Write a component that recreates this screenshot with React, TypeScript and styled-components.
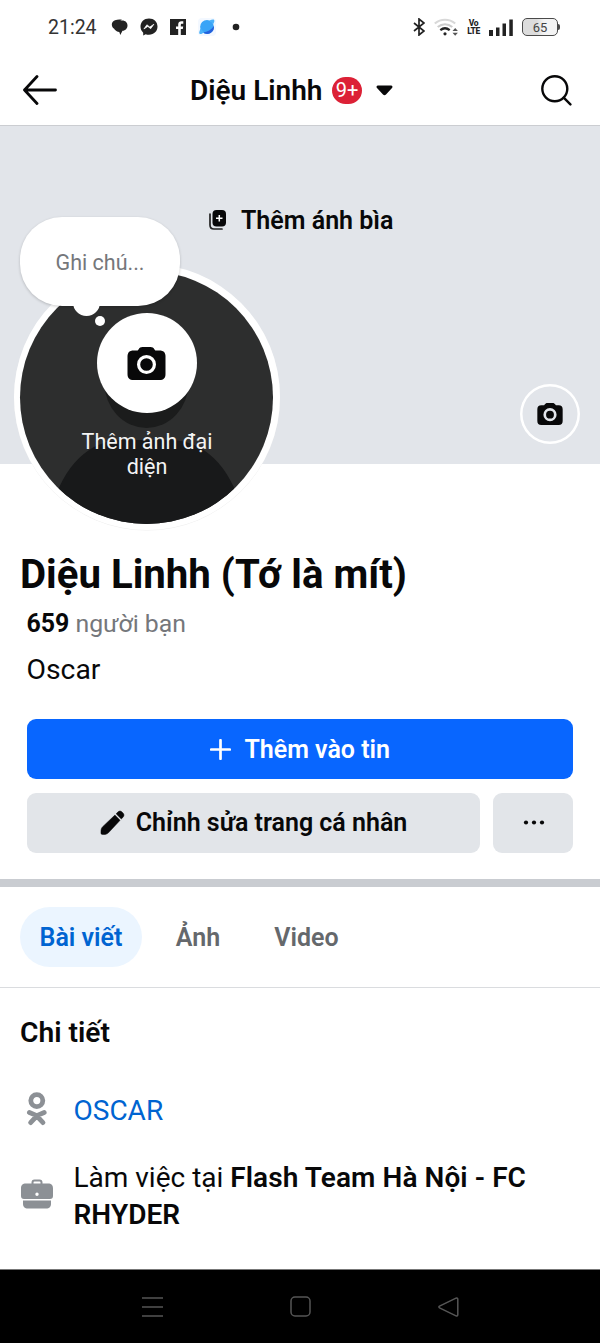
import React from "react";
import styled, { createGlobalStyle } from "styled-components";

const GlobalStyle = createGlobalStyle`
  * { box-sizing: border-box; }
  body { margin: 0; background: #fff; }
  button { font: inherit; color: inherit; border: 0; padding: 0; background: none; }
  svg { display: block; flex: none; }
`;

const Screen = styled.div`
  width: 600px;
  height: 1343px;
  display: flex;
  flex-direction: column;
  overflow: hidden;
  background: #fff;
  color: #080809;
  font-family: Roboto, "Liberation Sans", sans-serif;
`;

const Label = styled.span<{ $size: number; $weight?: number; $spacing?: number; $color?: string }>`
  font-size: ${(p) => p.$size}px;
  font-weight: ${(p) => p.$weight ?? 400};
  letter-spacing: ${(p) => p.$spacing ?? 0}px;
  color: ${(p) => p.$color ?? "inherit"};
  white-space: nowrap;
`;

const StatusBar = styled.div`
  height: 54px;
  display: flex;
  align-items: center;
  justify-content: space-between;
  padding: 0 42px 0 48px;
`;

const StatusGroup = styled.div<{ $gap: number }>`
  display: flex;
  align-items: center;
  gap: ${(p) => p.$gap}px;
`;

const Clock = styled(Label)`
  width: 49px;
  margin-right: 2px;
`;

const VoLte = styled.span`
  display: flex;
  flex-direction: column;
  align-items: center;
  width: 13px;
  font-size: 8.5px;
  line-height: 8px;
  font-weight: 800;
  letter-spacing: -0.4px;
  color: #222;
`;

const Battery = styled.span`
  position: relative;
  width: 36px;
  height: 18px;
  border: 1.5px solid #4a4a4a;
  border-radius: 5px;
  background: linear-gradient(90deg, #dcdcdc 0 40%, #f4f4f4 62%);
  display: flex;
  align-items: center;
  justify-content: center;
  font-size: 13px;
  line-height: 15px;
  color: #444;
  &::after {
    content: "";
    position: absolute;
    right: -3px;
    top: 5px;
    width: 2px;
    height: 6px;
    border-radius: 0 2px 2px 0;
    background: #4a4a4a;
  }
`;

const Header = styled.header`
  height: 72px;
  display: grid;
  grid-template-columns: 60px 1fr 60px;
  align-items: center;
  border-bottom: 1px solid #cbcdd1;
`;

const HeaderTitle = styled.div`
  display: flex;
  align-items: center;
  padding: 2px 0 0 130px;
`;

const CountBadge = styled.span`
  width: 30px;
  height: 27px;
  margin: -1px 14px 0 9.5px;
  border-radius: 14px;
  background: #dc2136;
  display: flex;
  align-items: center;
  justify-content: center;
`;

const IconSlot = styled.button<{ $left: number; $top?: number }>`
  padding: ${(p) => p.$top ?? 0}px 0 0 ${(p) => p.$left}px;
`;

const Cover = styled.section`
  position: relative;
  height: 338px;
  background: #e2e5ea;
`;

const AddCover = styled.button`
  display: flex;
  align-items: center;
  gap: 15px;
  height: 188px;
  padding-left: 209px;
`;

const CoverCamera = styled.button`
  position: absolute;
  right: 20px;
  bottom: 20px;
  width: 60px;
  height: 60px;
  border-radius: 50%;
  box-shadow: inset 0 0 0 2.5px #fff;
  display: flex;
  align-items: center;
  justify-content: center;
`;

const Avatar = styled.div`
  position: absolute;
  left: 13.5px;
  top: 138px;
  width: 266px;
  height: 266px;
  padding: 6.5px;
  border-radius: 50%;
  background: #fff;
  box-shadow: 0 0.5px 0.5px #eee;
`;

const AvatarFace = styled.div`
  position: relative;
  width: 253px;
  height: 253px;
  border-radius: 50%;
  overflow: hidden;
  background: #2d2e2e;
  display: flex;
  flex-direction: column;
  align-items: center;
  padding-top: 42px;
`;

const Silhouette = styled.svg`
  position: absolute;
  inset: 0;
`;

const AvatarCamera = styled.div`
  position: relative;
  width: 100px;
  height: 100px;
  padding-top: 2px;
  border-radius: 50%;
  background: #fff;
  display: flex;
  align-items: center;
  justify-content: center;
`;

const AvatarText = styled.p`
  position: relative;
  margin: 16px 0 0;
  padding-left: 1px;
  font-size: 21.5px;
  line-height: 25px;
  text-align: center;
  color: #f4f4f4;
`;

const NoteBubble = styled.div`
  position: absolute;
  left: 20px;
  top: 91px;
  width: 160px;
  height: 88.5px;
  padding-top: 2px;
  border-radius: 42px;
  background: #fff;
  box-shadow: 0 1px 3px rgba(0, 0, 0, 0.2);
  display: flex;
  align-items: center;
  justify-content: center;
`;

const BubbleDot = styled.span<{ $x: number; $y: number; $d: number }>`
  position: absolute;
  left: ${(p) => p.$x}px;
  top: ${(p) => p.$y}px;
  width: ${(p) => p.$d}px;
  height: ${(p) => p.$d}px;
  border-radius: 50%;
  background: #fff;
`;

const Profile = styled.section`
  height: 255px;
  padding: 88px 26.5px 0;
`;

const Name = styled.h1`
  margin: 0 0 0 -6.5px;
  font-size: 40.200px;
  line-height: 46px;
  font-weight: 700;
  white-space: nowrap;
`;

const Line = styled.div<{ $height: number; $top: number }>`
  margin-top: ${(p) => p.$top}px;
  height: ${(p) => p.$height}px;
  line-height: ${(p) => p.$height}px;
`;

const Actions = styled.section`
  display: grid;
  grid-template-columns: 453px 80px;
  grid-template-rows: 60px 60px;
  gap: 13.5px;
  padding: 0 26.5px;
  height: 160px;
`;

const ActionButton = styled.button<{ $primary?: boolean; $gap?: number }>`
  grid-column: ${(p) => (p.$primary ? "1 / -1" : "auto")};
  display: flex;
  align-items: center;
  justify-content: center;
  gap: ${(p) => p.$gap ?? 0}px;
  padding-left: 1px;
  border-radius: 9px;
  background: ${(p) => (p.$primary ? "#0866ff" : "#e2e5e9")};
  color: ${(p) => (p.$primary ? "#fff" : "#080809")};
`;

const Divider = styled.div`
  height: 8px;
  background: #c9ccd1;
`;

const Tabs = styled.nav`
  height: 101px;
  display: flex;
  align-items: center;
  padding: 0 20px;
  border-bottom: 1px solid #dadcdf;
`;

const Tab = styled.button<{ $active?: boolean; $width: number }>`
  width: ${(p) => p.$width}px;
  height: 60px;
  padding-top: 1px;
  border-radius: 30px;
  background: ${(p) => (p.$active ? "#ebf5ff" : "transparent")};
  color: ${(p) => (p.$active ? "#0064d1" : "#65686c")};
`;

const Details = styled.section`
  flex: 1;
  padding: 27px 20px 0;
`;

const SectionTitle = styled.h2`
  margin: 0 0 41px;
  font-size: 28.2px;
  line-height: 36px;
  font-weight: 600;
`;

const DetailRow = styled.div<{ $top?: number }>`
  display: grid;
  grid-template-columns: 53.5px 1fr;
  align-items: center;
  margin-top: ${(p) => p.$top ?? 0}px;
  font-size: 28px;
  line-height: 37px;
`;

const DetailIcon = styled.span<{ $left?: number; $bottom: number }>`
  padding: 0 0 ${(p) => p.$bottom}px ${(p) => p.$left ?? 0}px;
`;

const DetailText = styled.div<{ $link?: boolean }>`
  color: ${(p) => (p.$link ? "#0064d1" : "inherit")};
  b { font-weight: 600; letter-spacing: 0.08px; }
`;

const NavBar = styled.footer`
  height: 74px;
  background: #000;
  border-top: 1px solid #777;
  display: flex;
  justify-content: space-between;
  align-items: center;
  padding: 0 141px 0 142px;
`;

const Camera = ({ width, height, hole, ring }: { width: number; height: number; hole: string; ring: number }) => (
  <svg width={width} height={height} viewBox="0 0 38 33">
    <path
      d="M11 2.400C12 .8 13.200 0 15 0h8c1.800 0 3 .8 4 2.400l.8 1.100H32c4 0 6 2 6 6V27c0 4-2 6-6 6H6c-4 0-6-2-6-6V9.500c0-4 2-6 6-6h4.200z"
      fill="#080809"
    />
    <circle cx="19" cy="17.500" r="7.900" fill="none" stroke={hole} strokeWidth={ring} />
  </svg>
);

const ConversationIcon = () => (
  <svg width="17" height="17" viewBox="0 0 17 17">
    <path d="M2.800 9.500C-.2 7 .2 2.500 4 1.200 6 .5 9 .3 11 .8L6 4z" fill="#222" />
    <path d="M8 1.500h3.200c3.300 0 5.300 2.300 5.300 5s-2 5.300-5 5.300L9.300 16 8.300 13C4.500 12.500 2.400 9.800 2.400 6.800 2.400 3.800 5 1.500 8 1.500z" fill="#222" />
  </svg>
);

const MessengerIcon = () => (
  <svg width="18" height="18" viewBox="0 0 18 18">
    <path d="M9 .5C4 .5.5 4 .5 8.600c0 2.500 1 4.600 2.700 6.100V17.500l2.500-1.200c1 .4 2.100.5 3.300.5 5 0 8.500-3.500 8.500-8.200S14 .5 9 .5z" fill="#222" />
    <path d="M3.900 11l3-4.200 2.900 2.300 4.100-2.900-3.200 4.500-2.900-2.300z" fill="#fff" stroke="#fff" strokeWidth=".7" strokeLinejoin="round" />
  </svg>
);

const FacebookIcon = () => (
  <svg width="16" height="16" viewBox="0 0 16 16">
    <path d="M0 0h16v16H0z" fill="#222" />
    <path d="M8.200 16V10H6V7.400h2.200V5.500C8.200 3.400 9.500 2.300 11.400 2.300h1.900v2.500H12c-.9 0-1.200.4-1.200 1.200v1.400h2.400L12.800 10h-2v6z" fill="#fff" />
  </svg>
);

const PlanetIcon = () => (
  <svg width="18" height="18" viewBox="0 0 18 18">
    <rect width="18" height="18" rx="4" fill="#f3f8ff" />
    <circle cx="9" cy="9" r="6.900" fill="#39a4f7" />
    <path d="M15.900 8A6.900 6.900 0 0 1 5 14.600C9.500 14 13.500 11.500 15.900 8z" fill="#2460dc" />
    <path d="M1.500 15.800c-.7-1 0-3 1.100-5.300L6 14.600c-1.600 1.100-3.500 2-4.500 1.200zM11.500 2.600c2-1 4-1.300 4.600-.7.600.7.100 2.300-.9 4.100z" fill="#4ab2fa" />
  </svg>
);

const BluetoothIcon = () => (
  <svg width="12" height="18" viewBox="0 0 12 18">
    <path d="M1 5l10 8-5 4V1l5 4-10 8" fill="none" stroke="#222" strokeWidth="1.700" />
  </svg>
);

const WifiIcon = () => (
  <svg width="24" height="18" viewBox="0 0 24 18">
    <g fill="none" strokeWidth="2.200">
      <path d="M.8 5.500c6-5 14.400-5 20.400 0" stroke="#d8d8d8" />
      <path d="M3.700 9c4.500-3.700 10.100-3.700 14.600 0" stroke="#ccc" />
      <path d="M6.300 12.200c3-2.500 6.400-2.500 9.400 0" stroke="#222" />
    </g>
    <circle cx="11" cy="15.800" r="1.600" fill="#222" />
    <path d="M18.500 13l2.700-3 2.700 3zM18.500 14.800l2.700 3 2.700-3z" fill="#555" />
  </svg>
);

const SignalIcon = () => (
  <svg width="24" height="17" viewBox="0 0 24 17">
    <path d="M0 11h4v6H0zM7 8.500h3.500V17H7zM13.500 4.500H17V17h-3.500zM20.300.5h3.500V17h-3.500z" fill="#222" />
  </svg>
);

const OkIcon = () => (
  <svg width="33" height="34" viewBox="-7 0 33 34">
    <g fill="none" stroke="#8c9095" strokeLinecap="round" strokeLinejoin="round">
      <circle cx="9.800" cy="8.600" r="6" strokeWidth="4.800" />
      <path d="M2.400 20.500L9.800 23.600 17.200 20.500M9.800 24L3.600 30.600M9.800 24l6.200 6.600" strokeWidth="4.800" />
    </g>
  </svg>
);

const BriefcaseIcon = () => (
  <svg width="32" height="30" viewBox="0 0 32 30">
    <path d="M11.500 5V3.500c0-1.300.7-2 2-2h5c1.300 0 2 .7 2 2V5" fill="none" stroke="#8c9095" strokeWidth="2" />
    <path fillRule="evenodd" d="M5 4.500h22c3.500 0 5 1.500 5 5V17c0 2-1 3-3 3H3c-2 0-3-1-3-3V9.500c0-3.500 1.500-5 5-5zm11 9a1.700 1.700 0 1 0 0 3.400 1.700 1.700 0 0 0 0-3.400z" fill="#8c9095" />
    <path d="M2 21.500h28V24.500c0 3.500-1.500 5-5 5H7c-3.500 0-5-1.500-5-5z" fill="#8c9095" />
  </svg>
);

export default function App() {
  return (
    <Screen>
      <GlobalStyle />
      <StatusBar>
        <StatusGroup $gap={12}>
          <Clock $size={19.5} $color="#333">21:24</Clock>
          <ConversationIcon />
          <MessengerIcon />
          <FacebookIcon />
          <PlanetIcon />
          <svg width="16" height="8" viewBox="0 0 16 8"><circle cx="8" cy="4" r="3.300" fill="#222" /></svg>
        </StatusGroup>
        <StatusGroup $gap={9}>
          <BluetoothIcon />
          <WifiIcon />
          <VoLte><span>Vo</span><span>LTE</span></VoLte>
          <SignalIcon />
          <Battery>65</Battery>
        </StatusGroup>
      </StatusBar>

      <Header>
        <IconSlot $left={23} aria-label="Back">
          <svg width="34" height="30" viewBox="0 0 34 30">
            <path d="M14 1.500L1.500 15 14 28.500M1.500 15h31" fill="none" stroke="#080809" strokeWidth="2.800" strokeLinecap="round" strokeLinejoin="round" />
          </svg>
        </IconSlot>
        <HeaderTitle>
          <Label $size={28} $weight={600}>Diệu Linhh</Label>
          <CountBadge><Label $size={20} $color="#fff">9+</Label></CountBadge>
          <svg width="17" height="11" viewBox="0 0 17 11">
            <path d="M2 .5h13c1.500 0 2 1.500 1 2.500l-6 6.500c-1 1-2 1-3 0L1 3C0 2 .5.500 2 .5z" fill="#080809" />
          </svg>
        </HeaderTitle>
        <IconSlot $left={1} $top={1} aria-label="Search">
          <svg width="31" height="31" viewBox="0 0 31 31">
            <circle cx="13.800" cy="13.800" r="12.500" fill="none" stroke="#080809" strokeWidth="2.400" />
            <path d="M22.700 22.700l6.700 6.700" stroke="#080809" strokeWidth="2.400" strokeLinecap="round" />
          </svg>
        </IconSlot>
      </Header>

      <Cover>
        <AddCover>
          <svg width="17" height="20" viewBox="0 0 17 20">
            <rect x="3.500" y="0" width="13.500" height="16.500" rx="4" fill="#080809" />
            <path d="M1 4v11c0 2.500 1.200 4 4 4h8" fill="none" stroke="#222" strokeWidth="1.700" strokeLinecap="round" />
            <path d="M10.300 5v6.500M7 8.300h6.500" stroke="#fff" strokeWidth="1.500" />
          </svg>
          <Label $size={25} $weight={600}>Thêm ánh bìa</Label>
        </AddCover>
        <CoverCamera aria-label="Camera"><Camera width={26} height={22} hole="#e2e5ea" ring={4} /></CoverCamera>
        <Avatar>
          <AvatarFace>
            <Silhouette width="253" height="253" viewBox="0 0 253 253">
              <ellipse cx="126.500" cy="112" rx="42" ry="45" fill="#1b1c1c" />
              <path d="M28 260C34 203 65 169 102 169h48c38 0 69 34 75 91z" fill="#18191a" />
            </Silhouette>
            <AvatarCamera><Camera width={39} height={33} hole="#fff" ring={3.2} /></AvatarCamera>
            <AvatarText>Thêm ảnh đại<br />diện</AvatarText>
          </AvatarFace>
        </Avatar>
        <NoteBubble><Label $size={21.5} $color="#75777b">Ghi chú...</Label></NoteBubble>
        <BubbleDot $x={73} $y={163} $d={27} />
        <BubbleDot $x={95} $y={190} $d={10} />
      </Cover>

      <Profile>
        <Name>Diệu Linhh (Tớ là mít)</Name>
        <Line $height={30} $top={11}>
          <Label $size={24.9} $weight={700}>659</Label>
          <Label $size={24.8} $color="#75777b"> người bạn</Label>
        </Line>
        <Line $height={34} $top={14}><Label $size={28.3}>Oscar</Label></Line>
      </Profile>

      <Actions>
        <ActionButton $primary $gap={13}>
          <svg width="21" height="21" viewBox="0 0 21 21">
            <path d="M10.500 1.200v18.600M1.200 10.500h18.600" stroke="#fff" strokeWidth="2.700" strokeLinecap="round" />
          </svg>
          <Label $size={25} $weight={600}>Thêm vào tin</Label>
        </ActionButton>
        <ActionButton $gap={11}>
          <svg width="25" height="25" viewBox="0 0 25 26">
            <path d="M15 5.300L20.400 10.700 8.300 23.700C7 25 5.500 25.500 3.500 25.500H2C1 25.500.5 25 .5 24v-1.500C.5 20 1 18.700 2.300 17.300zM16.300 4L18 2.200c1.500-1.500 3-1.500 4.400-.1l1 1c1.400 1.400 1.400 3.100-.1 4.600L21.600 9.300z" fill="#080809" stroke="#080809" strokeWidth=".5" strokeLinejoin="round" />
          </svg>
          <Label $size={25} $weight={600}>Chỉnh sửa trang cá nhân</Label>
        </ActionButton>
        <ActionButton aria-label="More">
          <svg width="22" height="6" viewBox="0 0 22 6">
            <g fill="#080809"><circle cx="3" cy="2.500" r="2.100" /><circle cx="11" cy="2.500" r="2.100" /><circle cx="19" cy="2.500" r="2.100" /></g>
          </svg>
        </ActionButton>
      </Actions>

      <Divider />

      <Tabs>
        <Tab $active $width={122}><Label $size={25} $weight={600}>Bài viết</Label></Tab>
        <Tab $width={112}><Label $size={25} $weight={600}>Ảnh</Label></Tab>
        <Tab $width={105}><Label $size={25} $weight={600}>Video</Label></Tab>
      </Tabs>

      <Details>
        <SectionTitle>Chi tiết</SectionTitle>
        <DetailRow>
          <DetailIcon $bottom={3}><OkIcon /></DetailIcon>
          <DetailText $link>OSCAR</DetailText>
        </DetailRow>
        <DetailRow $top={30}>
          <DetailIcon $left={0.7} $bottom={5}><BriefcaseIcon /></DetailIcon>
          <DetailText>Làm việc tại <b>Flash Team Hà Nội - FC<br />RHYDER</b></DetailText>
        </DetailRow>
      </Details>

      <NavBar>
        <svg width="21" height="20" viewBox="0 0 21 20"><path d="M0 1h21M0 10h21M0 19h21" stroke="#565656" strokeWidth="1.500" /></svg>
        <svg width="21" height="21" viewBox="0 0 21 21"><rect x="1" y="1" width="19" height="19" rx="4" fill="none" stroke="#565656" strokeWidth="1.500" /></svg>
        <svg width="21" height="20" viewBox="0 0 21 20"><path d="M1.500 9.200L18 1.200c1-.4 1.800 0 1.800 1v15.600c0 1-.8 1.400-1.800 1L1.500 10.800c-.8-.4-.8-1.200 0-1.600z" fill="none" stroke="#565656" strokeWidth="1.500" /></svg>
      </NavBar>
    </Screen>
  );
}
